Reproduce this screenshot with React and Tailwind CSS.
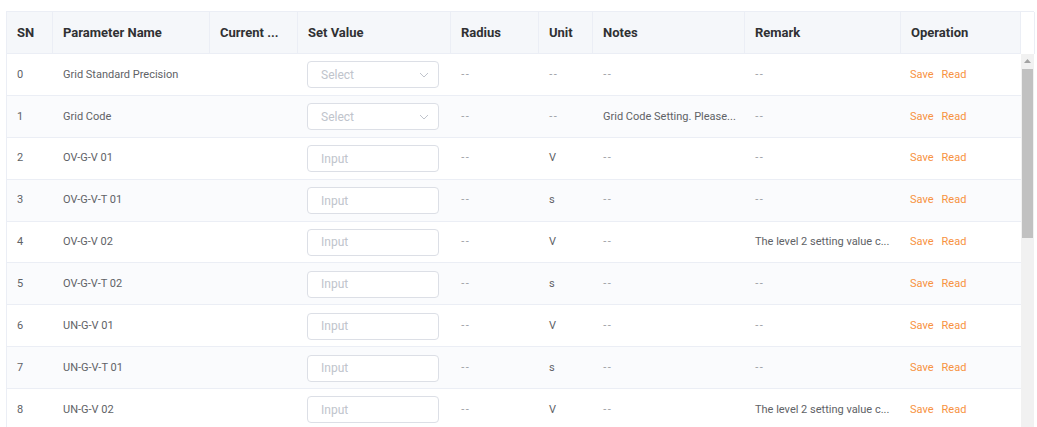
import React from "react";

const cols = [
  { key: "sn", label: "SN", w: "w-[46px]" },
  { key: "name", label: "Parameter Name", w: "w-[157px]" },
  { key: "cur", label: "Current ...", w: "w-[88px]" },
  { key: "set", label: "Set Value", w: "w-[153px]" },
  { key: "radius", label: "Radius", w: "w-[88px]" },
  { key: "unit", label: "Unit", w: "w-[54px]" },
  { key: "notes", label: "Notes", w: "w-[152px]" },
  { key: "remark", label: "Remark", w: "w-[156px]" },
  { key: "op", label: "Operation", w: "w-[120px]" },
];

const rows = [
  { sn: 0, name: "Grid Standard Precision", type: "select", unit: "--", notes: "--", remark: "--" },
  { sn: 1, name: "Grid Code", type: "select", unit: "--", notes: "Grid Code Setting. Please...", remark: "--" },
  { sn: 2, name: "OV-G-V 01", type: "input", unit: "V", notes: "--", remark: "--" },
  { sn: 3, name: "OV-G-V-T 01", type: "input", unit: "s", notes: "--", remark: "--" },
  { sn: 4, name: "OV-G-V 02", type: "input", unit: "V", notes: "--", remark: "The level 2 setting value c..." },
  { sn: 5, name: "OV-G-V-T 02", type: "input", unit: "s", notes: "--", remark: "--" },
  { sn: 6, name: "UN-G-V 01", type: "input", unit: "V", notes: "--", remark: "--" },
  { sn: 7, name: "UN-G-V-T 01", type: "input", unit: "s", notes: "--", remark: "--" },
  { sn: 8, name: "UN-G-V 02", type: "input", unit: "V", notes: "--", remark: "The level 2 setting value c..." },
];

function Muted({ v }) {
  if (v === "--")
    return (
      <span
        className="text-[#979a9f] text-[11px] tracking-[1px] pb-[4px]"
        style={{ fontFamily: '"Open Sans", sans-serif' }}
      >
        --
      </span>
    );
  return <span className="text-[#606266] whitespace-nowrap">{v}</span>;
}

function Chevron() {
  return (
    <svg width="12" height="12" viewBox="0 0 12 12" fill="none">
      <path d="M2 4l4 4 4-4" stroke="#c0c4cc" strokeWidth="1" />
    </svg>
  );
}

export default function App() {
  return (
    <div
      className="w-[1037px] h-[427px] overflow-hidden bg-white pl-[6px] pt-[11px]"
      style={{ fontFamily: 'Roboto, "Open Sans", sans-serif' }}
    >
      <div className="w-[1028px] border-l border-t border-[#ebeef5]">
        {/* header */}
        <div className="flex h-[42px]">
          {cols.map((c) => (
            <div
              key={c.key}
              className={`${c.w} shrink-0 bg-[#f5f7fa] border-r border-b border-[#ebeef5] flex items-center pl-[10px] text-[13px] font-bold text-[#303133] whitespace-nowrap`}
            >
              {c.label}
            </div>
          ))}
          <div className="w-[14px] shrink-0 bg-white border-r border-[#ebeef5]"></div>
        </div>
        {/* body */}
        <div className="flex h-[380px] overflow-hidden">
          <div className="w-[1014px] shrink-0">
            {rows.map((r, i) => (
              <div
                key={r.sn}
                className={`flex h-[41.875px] pt-[1px] border-b border-[#ebeef5] text-[11px] text-[#606266] ${i % 2 === 1 ? "bg-[#fafbfd]" : "bg-white"}`}
              >
                <div className="w-[46px] shrink-0 flex items-center pl-[10px]">{r.sn}</div>
                <div className="w-[157px] shrink-0 flex items-center pl-[10px] whitespace-nowrap">{r.name}</div>
                <div className="w-[88px] shrink-0"></div>
                <div className="w-[153px] shrink-0 flex items-center pl-[9px]">
                  <div className="w-[132px] h-[27px] border border-[#dcdfe6] rounded-[4px] bg-white flex items-center justify-between pl-[13px] pr-[8px] text-[12px] text-[#c0c4cc]">
                    <span>{r.type === "select" ? "Select" : "Input"}</span>
                    {r.type === "select" && <Chevron />}
                  </div>
                </div>
                <div className="w-[88px] shrink-0 flex items-center pl-[10px]">
                  <Muted v="--" />
                </div>
                <div className="w-[54px] shrink-0 flex items-center pl-[10px]">
                  <Muted v={r.unit} />
                </div>
                <div className="w-[152px] shrink-0 flex items-center pl-[10px]">
                  <Muted v={r.notes} />
                </div>
                <div className="w-[156px] shrink-0 flex items-center pl-[10px]">
                  <Muted v={r.remark} />
                </div>
                <div className="w-[120px] shrink-0 flex items-center pl-[9px] gap-[8px] text-[#f7923f]">
                  <span>Save</span>
                  <span>Read</span>
                </div>
              </div>
            ))}
          </div>
          {/* scrollbar */}
          <div className="w-[14px] shrink-0 bg-[#f1f1f1] border-r border-[#ebeef5] flex flex-col items-center pt-[5px]">
            <svg width="7" height="4" viewBox="0 0 7 4">
              <path d="M0 4L3.5 0L7 4Z" fill="#a3a3a3" />
            </svg>
            <div className="mt-[6px] w-[11px] h-[169px] bg-[#c1c1c1]"></div>
          </div>
        </div>
      </div>
    </div>
  );
}
